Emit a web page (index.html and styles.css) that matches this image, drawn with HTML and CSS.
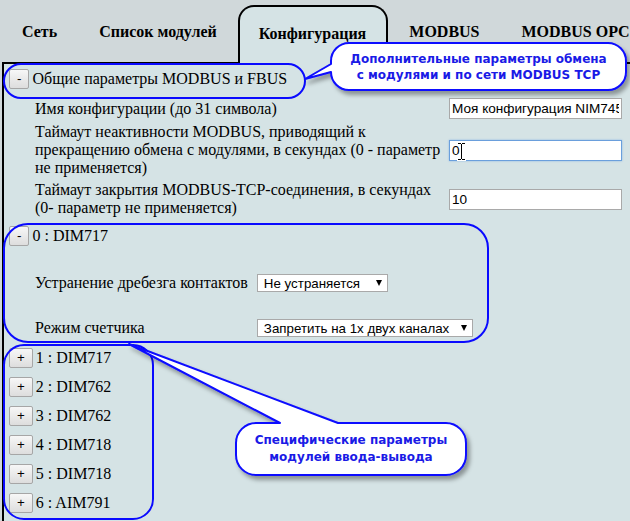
FILE: index.html
```html
<!DOCTYPE html>
<html lang="ru">
<head>
<meta charset="utf-8">
<title>Конфигурация</title>
<link rel="stylesheet" href="styles.css">
</head>
<body>
<nav class="tabs">
  <div class="tab">Сеть</div>
  <div class="tab">Список модулей</div>
  <div class="tab active">Конфигурация</div>
  <div class="tab">MODBUS</div>
  <div class="tab">MODBUS OPC</div>
</nav>
<main class="panel">
  <section class="group">
    <div class="head"><button class="tog">-</button><span>Общие параметры MODBUS и FBUS</span></div>
    <div class="params">
      <span class="lbl">Имя конфигурации (до 31 символа)</span>
      <input class="txt" type="text" value="Моя конфигурация NIM7450">
      <span class="lbl">Таймаут неактивности MODBUS, приводящий к прекращению обмена с модулями, в секундах (0 - параметр не применяется)</span>
      <input class="txt focus" type="text" value="0">
      <span class="lbl">Таймаут закрытия MODBUS-TCP-соединения, в секундах (0- параметр не применяется)</span>
      <input class="txt" type="text" value="10">
    </div>
  </section>
  <section class="group mod">
    <div class="head"><button class="tog">-</button><span>0 : DIM717</span></div>
    <div class="mod-params">
      <span class="lbl">Устранение дребезга контактов</span>
      <div class="sel w1"><span>Не устраняется</span><i class="arr"></i></div>
      <span class="lbl">Режим счетчика</span>
      <div class="sel w2"><span>Запретить на 1х двух каналах</span><i class="arr"></i></div>
    </div>
  </section>
  <div class="mod-list">
    <div class="head"><button class="tog">+</button><span>1 : DIM717</span></div>
    <div class="head"><button class="tog">+</button><span>2 : DIM762</span></div>
    <div class="head"><button class="tog">+</button><span>3 : DIM762</span></div>
    <div class="head"><button class="tog">+</button><span>4 : DIM718</span></div>
    <div class="head"><button class="tog">+</button><span>5 : DIM718</span></div>
    <div class="head"><button class="tog">+</button><span>6 : AIM791</span></div>
  </div>
</main>

<svg class="annot" width="630" height="521" viewBox="0 0 630 521" xmlns="http://www.w3.org/2000/svg">
  <defs>
    <filter id="sh" x="-10%" y="-20%" width="130%" height="160%">
      <feDropShadow dx="3" dy="4" stdDeviation="2" flood-color="#000" flood-opacity="0.35"/>
    </filter>
  </defs>
  <rect x="4" y="64" width="301" height="34" rx="17" fill="none" stroke="#0a0aff" stroke-width="2"/>
  <rect x="4" y="224" width="484" height="118" rx="24" fill="none" stroke="#0a0aff" stroke-width="2"/>
  <rect x="4" y="345" width="149" height="174" rx="20" fill="none" stroke="#0a0aff" stroke-width="2"/>
  <path filter="url(#sh)" fill="#fff" stroke="#0a0aff" stroke-width="2" stroke-linejoin="round"
        d="M349 43 H608 A18 18 0 0 1 626 61 V72 A18 18 0 0 1 608 90 H349 A18 18 0 0 1 331 72 L305 79 L331 64 V61 A18 18 0 0 1 349 43 Z"/>
  <path filter="url(#sh)" fill="#fff" stroke="#0a0aff" stroke-width="2" stroke-linejoin="round"
        d="M256 423 H280 L129 344 L338 423 H446 A20 20 0 0 1 466 443 V455 A20 20 0 0 1 446 475 H256 A20 20 0 0 1 236 455 V443 A20 20 0 0 1 256 423 Z"/>
  <g class="ibeam" fill="none" stroke-linecap="square">
    <path d="M458.5 143.5 H460.5 M462.5 143.5 H464.5 M461.5 144.5 V158.5 M458.5 159.5 H460.5 M462.5 159.5 H464.5" stroke="#fff" stroke-width="3"/>
    <path d="M458.5 143.5 H460.5 M462.5 143.5 H464.5 M461.5 144.5 V158.5 M458.5 159.5 H460.5 M462.5 159.5 H464.5" stroke="#000" stroke-width="1"/>
  </g>
</svg>
<div class="note note1">Дополнительные параметры обмена<br>с модулями и по сети MODBUS TCP</div>
<div class="note note2">Специфические параметры<br>модулей ввода-вывода</div>
</body>
</html>
```

FILE: styles.css
```css
* { box-sizing: border-box; }

body {
  margin: 0;
  width: 630px;
  height: 521px;
  overflow: hidden;
  position: relative;
  background: #d0d8da;
  color: #000;
  font-family: "Liberation Serif", "Times New Roman", serif;
  font-size: 16px;
}

.tabs {
  display: flex;
  height: 62px;
  padding-left: 1px;
  white-space: nowrap;
}

.tab {
  flex-shrink: 0;
  border: 2px solid transparent;
  border-bottom: 0;
  padding: 21px 19px 0;
  font-weight: bold;
  font-size: 16px;
}

.tab.active {
  margin-top: 5px;
  margin-bottom: -2px;
  padding: 18px 20px 0 19px;
  border-color: #000;
  border-radius: 16px 16px 0 0;
  background: #d5e3e5;
  position: relative;
  z-index: 1;
}

.panel {
  display: block;
  height: 459px;
  margin-left: 2px;
  border-left: 2px solid #000;
  border-top: 2px solid #000;
  background: #d5e3e5;
  padding: 4px 0 0 5px;
}

.head {
  display: flex;
  align-items: center;
  gap: 3px;
  height: 21px;
  white-space: nowrap;
}

.tog {
  height: 20px;
  margin: 0;
  padding: 0 7px;
  border: 1px solid #a6a6a6;
  border-radius: 2px;
  background: linear-gradient(#f7f7f7, #dddddd);
  font-family: "Liberation Sans", Arial, sans-serif;
  font-size: 13.33px;
  line-height: 16px;
  color: #000;
}

.params {
  display: grid;
  grid-template-columns: 410px 173px;
  column-gap: 4px;
  row-gap: 4px;
  align-items: center;
  margin: 9px 0 0 26px;
}

.txt {
  height: 21px;
  width: 173px;
  margin: 0;
  padding: 1px 2px;
  border: 1px solid #a9a9a9;
  background: #fff;
  font-family: "Liberation Sans", Arial, sans-serif;
  font-size: 13.6px;
  color: #000;
}

.txt.focus {
  border-color: #6a9fdc;
  box-shadow: 0 0 2px #8fb8e6;
}

.mod {
  margin-top: 8px;
}

.mod-params {
  display: grid;
  grid-template-columns: max-content max-content;
  grid-auto-rows: 18px;
  column-gap: 9px;
  row-gap: 27px;
  align-items: center;
  margin: 28px 0 0 26px;
}

.sel {
  display: flex;
  align-items: center;
  justify-content: space-between;
  height: 18px;
  padding: 0 5px 0 6px;
  border: 1px solid #a9a9a9;
  background: #fff;
  font-family: "Liberation Sans", Arial, sans-serif;
  font-size: 13.33px;
  white-space: nowrap;
}

.sel.w1 { width: 131px; }
.sel.w2 { width: 216px; }

.arr {
  width: 0;
  height: 0;
  border-left: 3.5px solid transparent;
  border-right: 3.5px solid transparent;
  border-top: 6px solid #000;
}

.mod-list {
  display: flex;
  flex-direction: column;
  gap: 8px;
  margin-top: 10px;
}

.annot {
  position: absolute;
  left: 0;
  top: 0;
  z-index: 5;
  pointer-events: none;
}

.note {
  position: absolute;
  z-index: 6;
  text-align: center;
  color: #1a1ae6;
  font-family: "DejaVu Sans", Verdana, sans-serif;
  font-weight: bold;
  font-size: 12px;
  line-height: 16px;
  white-space: nowrap;
}

.note1 {
  left: 331px;
  top: 51px;
  width: 295px;
}

.note2 {
  left: 236px;
  top: 432px;
  width: 230px;
  line-height: 17px;
}
```
